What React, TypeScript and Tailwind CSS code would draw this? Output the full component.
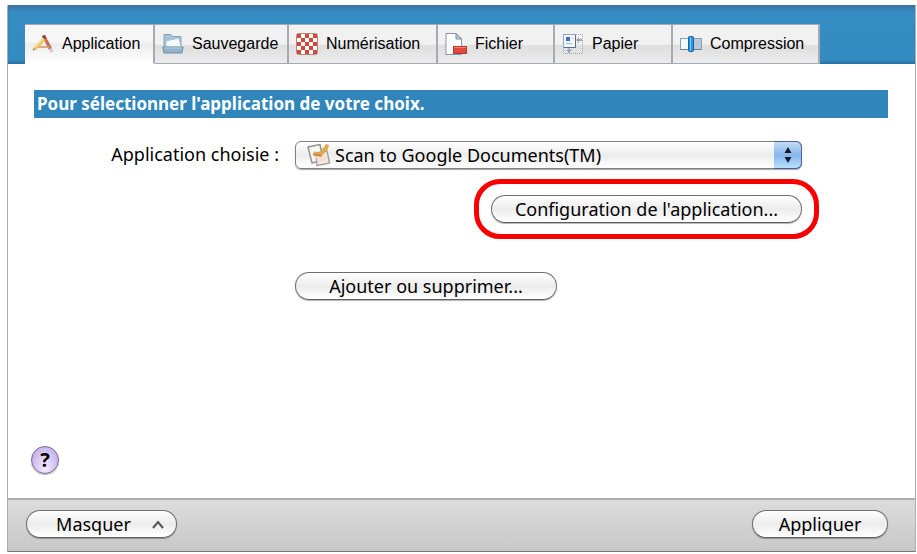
import { useState } from "react";
import type { ReactNode } from "react";
import clsx from "clsx";

const ApplicationIcon = () => (
  <svg width="22" height="22" viewBox="0 0 22 22" aria-hidden="true">
    <path d="M10 3 L13 2 L20 15 L17 17 Z" fill="#c9705c" />
    <path d="M10 3 L13 2 L14.500 5 L11.500 6.500 Z" fill="#8d4a45" />
    <path d="M17 16 L20 14.500 L21 19 L18.500 19.500 Z" fill="#cdc9c6" />
    <path d="M2 13 L17 13 L17 15 L2 15 Z" fill="#dfa77c" />
    <path d="M10.500 5 L13.500 7 L4.500 16.500 L0.500 17.500 L2 14 Z" fill="#e9c253" />
    <path d="M10.500 5 L12 6 L3 15.500 L2 14 Z" fill="#f6e093" />
    <path d="M0.500 17.500 L1.500 15 L3.500 16.800 Z" fill="#a89070" />
  </svg>
);

const FolderIcon = () => (
  <svg width="22" height="22" viewBox="0 0 22 22" aria-hidden="true">
    <path d="M2 1.500 H9 L11 3.500 H19 V19 H2 Z" fill="#a5c3d8" stroke="#86a4bb" />
    <path d="M4 8 L17 5 L19 14 H4 Z" fill="#f7fafc" stroke="#a8bac8" strokeWidth="0.800" />
    <path d="M0.800 14 H21.200 L20 20 H2 Z" fill="#8fb3ca" stroke="#6f90a8" />
    <path d="M2 15 H20" stroke="#bcd5e4" />
  </svg>
);

const CheckerIcon = () => (
  <svg width="22" height="22" viewBox="0 0 22 22" aria-hidden="true">
    <rect x="0.500" y="0.500" width="21" height="21" rx="2" fill="#fffaf3" stroke="#b8857a" />
    {[0, 1, 2, 3, 4].map((row) =>
      [0, 1, 2, 3, 4]
        .filter((col) => (row + col) % 2 === 0)
        .map((col) => (
          <rect
            key={`${row}-${col}`}
            x={1 + col * 4}
            y={1 + row * 4}
            width="4"
            height="4"
            fill="#d0493f"
          />
        ))
    )}
  </svg>
);

const FileIcon = () => (
  <svg width="22" height="22" viewBox="0 0 22 22" aria-hidden="true">
    <path d="M1 0.500 H11 L16.500 6 V21.500 H1 Z" fill="#fdfeff" stroke="#8496a8" />
    <path d="M11 0.500 V6 H16.500 Z" fill="#bccad6" stroke="#7d8fa1" />
    <rect x="8.500" y="13.500" width="13" height="7" fill="#e2483b" stroke="#b53a30" />
    <path d="M9 14.500 H21" stroke="#f08070" />
  </svg>
);

const PaperIcon = () => (
  <svg width="22" height="22" viewBox="0 0 22 22" aria-hidden="true">
    <path
      d="M14 1.500 H20.500 V20.500 H1.500 V15"
      fill="none"
      stroke="#9aa7b6"
      strokeDasharray="1 1"
    />
    <rect x="1.500" y="1.500" width="12" height="13" fill="#f2f7fd" stroke="#8fa6c4" />
    <path d="M13.500 2 V14.500 H2" fill="none" stroke="#5d6f88" />
    <rect x="4" y="4" width="4" height="4" fill="#3f6fc0" />
    <path d="M4 10.500 H10 M10 5 H11" stroke="#a8bcd6" />
    <path d="M14 7 L17 4 V6 H20 V8 H17 V10 Z" fill="#9aa6b3" />
    <path d="M7 15 L10 18 H8 V20 H6 V18 H4 Z" fill="#9aa6b3" />
  </svg>
);

const CompressionIcon = () => (
  <svg width="22" height="22" viewBox="0 0 22 22" aria-hidden="true">
    <rect x="0.500" y="5.500" width="9" height="11" fill="#f4f9fd" stroke="#8ba0b2" />
    <rect x="13" y="5.500" width="8.500" height="11" fill="#b9c9d6" stroke="#8ba0b2" />
    <path d="M0.500 16.500 H21.500" stroke="#6d8496" />
    <rect x="8.500" y="3.500" width="5" height="15" rx="1" fill="#2e93e0" stroke="#1264a8" />
    <path d="M10.500 4.500 V17.500" stroke="#7cc4f6" />
  </svg>
);

const ScanIcon = () => (
  <svg width="24" height="24" viewBox="0 0 24 24" aria-hidden="true">
    <path
      d="M1 4 L13 1.500 L16 17 L5 20 Z"
      fill="#f6f6f6"
      stroke="#949494"
      strokeLinejoin="round"
      strokeWidth="1.500"
    />
    <path
      d="M9 10 L20 8 L22.500 20 L10 22.500 Z"
      fill="#f6efeb"
      stroke="#a3a3a3"
      strokeLinejoin="round"
      strokeWidth="1.500"
    />
    <path d="M8 10 L18 10 L20 18 L11 20 Z" fill="#f9ddd0" />
    <path d="M7 8.500 L13 9.500 L19 1 L22 2 L21 6 L14 14 L6 12 Z" fill="#dfa94c" />
    <path d="M6 11.500 L14 12.500" stroke="#c08440" strokeWidth="1.500" />
  </svg>
);

const tabs = [
  { name: "Application", icon: <ApplicationIcon />, width: "w-[130px]" },
  { name: "Sauvegarde", icon: <FolderIcon />, width: "w-[134px]" },
  { name: "Numérisation", icon: <CheckerIcon />, width: "w-[149px]" },
  { name: "Fichier", icon: <FileIcon />, width: "w-[117px]" },
  { name: "Papier", icon: <PaperIcon />, width: "w-[118px]" },
  { name: "Compression", icon: <CompressionIcon />, width: "w-[147px]" },
];

const PillButton = ({ children, className }: { children: ReactNode; className?: string }) => (
  <button
    type="button"
    className={clsx(
      "flex h-7 items-center justify-center rounded-full border border-[#707070] border-b-[#606060] bg-linear-to-b from-white via-[#ececec] to-white shadow-[0_1px_1px_rgba(0,0,0,0.3)]",
      className
    )}
  >
    {children}
  </button>
);

const App = () => {
  const [activeTab, setActiveTab] = useState("Application");

  return (
    <div className="min-h-screen flex flex-col bg-white pt-[5px] pl-[7px] pr-px pb-0.5 font-['Noto_Sans',sans-serif] text-lg leading-6 text-black">
      <div className="flex flex-1 flex-col border-x border-[#a9adb1] border-b border-b-[#777777]">
        {/* Tabs */}
        <header className="flex items-end bg-linear-to-b from-[#3577a5] via-[#368dc4] via-10% to-[#348bc2] border-t border-[#476f8a] pt-[18px] pl-[17px] shadow-[inset_0_-3px_3px_-1px_#2a6f9f]">
          <nav role="tablist" className="flex font-['Liberation_Sans',sans-serif] text-base">
            {tabs.map((tab) => (
              <button
                key={tab.name}
                type="button"
                role="tab"
                aria-selected={activeTab === tab.name}
                onClick={() => setActiveTab(tab.name)}
                className={clsx(
                  "flex h-10 items-center gap-2 border-t border-b border-r-2 border-[#a3abb3] pl-[7px] whitespace-nowrap",
                  tab.width,
                  activeTab === tab.name
                    ? "border-b-white bg-linear-to-b from-[#f6f6f6] from-45% via-[#ececed] via-50% to-white"
                    : "bg-linear-to-b from-[#f1f1f1] from-50% via-[#dedede] via-55% to-[#ececec]"
                )}
              >
                {tab.icon}
                {tab.name}
              </button>
            ))}
          </nav>
        </header>

        <main className="flex flex-1 flex-col pt-[26px] pr-[27px] pb-6 pl-[26px]">
          <h1 className="flex h-7 items-center bg-[#3086ba] pl-[3px] text-[17px] font-bold text-white">
            Pour sélectionner l'application de votre choix.
          </h1>

          {/* Application settings */}
          <div className="mt-[23px] flex pr-[86px]">
            <label htmlFor="application" className="w-[245px] pt-px text-right">
              Application choisie :
            </label>
            <div className="ml-4 flex flex-1 flex-col items-start">
              <div className="relative w-full">
                <select
                  id="application"
                  className="h-7 w-full appearance-none rounded-md border border-[#808080] bg-linear-to-b from-white via-[#ececec] to-white pl-[39px] leading-6 shadow-[0_1px_1px_rgba(0,0,0,0.35)]"
                >
                  <option>Scan to Google Documents(TM)</option>
                </select>
                <span className="pointer-events-none absolute top-0.5 left-3">
                  <ScanIcon />
                </span>
                <span className="pointer-events-none absolute inset-y-0 right-0 flex w-7 items-center justify-center rounded-r-md border border-l-0 border-[#4b5f9b] bg-linear-to-b from-[#c4dcf6] via-[#86b7ec] to-[#b7e0fb]">
                  <svg width="8" height="18" viewBox="0 0 8 18" aria-hidden="true">
                    <path d="M4 1 L7.500 7 H0.500 Z M0.500 11 H7.500 L4 17 Z" fill="#151b2b" />
                  </svg>
                </span>
              </div>

              <div className="relative mt-[26px] self-end">
                <PillButton className="w-[311px]">Configuration de l'application...</PillButton>
                <span className="pointer-events-none absolute -inset-x-[17px] -inset-y-4 rounded-[26px] border-[5px] border-[#f80000]" />
              </div>

              <PillButton className="mt-[49px] w-[262px]">Ajouter ou supprimer...</PillButton>
            </div>
          </div>

          <button
            type="button"
            aria-label="Aide"
            className="mt-auto -ml-[3px] flex size-7 items-center justify-center rounded-full border border-[#77688f] bg-radial-[at_50%_80%] from-[#f4edff] to-[#b9a0e6] text-xl font-bold shadow-[0_1px_1px_rgba(0,0,0,0.3)]"
          >
            ?
          </button>
        </main>

        <footer className="flex items-center justify-between border-t-2 border-[#adadad] bg-linear-to-b from-[#dcdcdc] to-[#c8c8c8] pt-2.5 pr-[27px] pb-[13px] pl-[18px]">
          <PillButton className="w-[151px] gap-5 pl-[18px]">
            Masquer
            <svg width="14" height="9" viewBox="0 0 14 9" aria-hidden="true">
              <path d="M2 8 L7 2 L12 8" fill="none" stroke="#555555" strokeWidth="2" />
            </svg>
          </PillButton>
          <PillButton className="w-[136px]">Appliquer</PillButton>
        </footer>
      </div>
    </div>
  );
};

export default App;
